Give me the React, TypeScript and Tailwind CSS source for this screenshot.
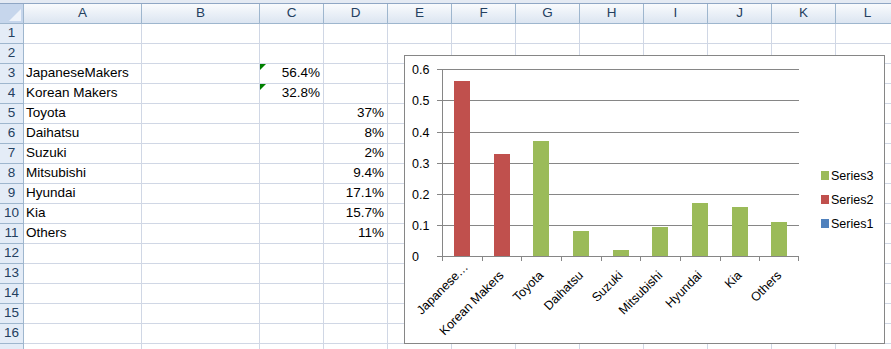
import React from 'react';

const colWidths = [
  'w-[118px]', 'w-[118px]', 'w-[64px]', 'w-[64px]', 'w-[64px]', 'w-[64px]',
  'w-[64px]', 'w-[64px]', 'w-[64px]', 'w-[64px]', 'w-[64px]', 'w-[64px]',
];
const colNames = ['A', 'B', 'C', 'D', 'E', 'F', 'G', 'H', 'I', 'J', 'K', 'L'];

interface Row {
  a?: string;
  c?: string;
  d?: string;
  flag?: boolean;
}

const rows: Row[] = [
  {},
  {},
  { a: 'JapaneseMakers', c: '56.4%', flag: true },
  { a: 'Korean Makers', c: '32.8%', flag: true },
  { a: 'Toyota', d: '37%' },
  { a: 'Daihatsu', d: '8%' },
  { a: 'Suzuki', d: '2%' },
  { a: 'Mitsubishi', d: '9.4%' },
  { a: 'Hyundai', d: '17.1%' },
  { a: 'Kia', d: '15.7%' },
  { a: 'Others', d: '11%' },
  {},
  {},
  {},
  {},
  {},
  {},
];

const RED = '#C0504D';
const GREEN = '#9BBB59';
const BLUE = '#4F81BD';

const bars = [
  { name: 'Japanese…', v: 0.564, color: RED },
  { name: 'Korean Makers', v: 0.328, color: RED },
  { name: 'Toyota', v: 0.37, color: GREEN },
  { name: 'Daihatsu', v: 0.08, color: GREEN },
  { name: 'Suzuki', v: 0.02, color: GREEN },
  { name: 'Mitsubishi', v: 0.094, color: GREEN },
  { name: 'Hyundai', v: 0.171, color: GREEN },
  { name: 'Kia', v: 0.157, color: GREEN },
  { name: 'Others', v: 0.11, color: GREEN },
];

function Chart() {
  const x0 = 37;
  const x1 = 394;
  const y0 = 200;
  const scale = 311.1;
  const step = (x1 - x0) / bars.length;
  const yOf = (v: number) => y0 - v * scale;
  const font = '"Liberation Sans", Arial, sans-serif';

  return (
    <div className="absolute left-[404px] top-[55px] w-[481px] h-[289px] border border-[#868686] bg-white">
      <svg width={479} height={287} className="block">
        {[0.1, 0.2, 0.3, 0.4, 0.5, 0.6].map((v) => (
          <line
            key={v}
            x1={x0 - 5}
            x2={x1}
            y1={Math.round(yOf(v)) + 0.5}
            y2={Math.round(yOf(v)) + 0.5}
            stroke="#868686"
          />
        ))}
        {[0, 0.1, 0.2, 0.3, 0.4, 0.5, 0.6].map((v) => (
          <text
            key={v}
            x={7}
            y={Math.round(yOf(v)) + 5}
            fontSize={12.5}
            fontFamily={font}
            fill="#000"
          >
            {v === 0 ? '0' : v.toFixed(1)}
          </text>
        ))}
        {bars.map((b, i) => {
          const cx = x0 + step * (i + 0.5);
          const top = Math.round(yOf(b.v));
          return (
            <rect
              key={b.name}
              x={Math.round(cx - 8)}
              y={top}
              width={16}
              height={y0 - top}
              fill={b.color}
            />
          );
        })}
        <line x1={x0 + 0.5} x2={x0 + 0.5} y1={Math.round(yOf(0.6))} y2={y0 + 1} stroke="#868686" />
        <line x1={x0 - 5} x2={x1} y1={y0 + 0.5} y2={y0 + 0.5} stroke="#868686" />
        {bars.map((_, i) => (
          <line
            key={i}
            x1={Math.round(x0 + step * i) + 0.5}
            x2={Math.round(x0 + step * i) + 0.5}
            y1={y0}
            y2={y0 + 5}
            stroke="#868686"
          />
        ))}
        <line x1={x1 - 0.5} x2={x1 - 0.5} y1={y0} y2={y0 + 5} stroke="#868686" />
        {bars.map((b, i) => {
          const cx = x0 + step * (i + 0.5);
          const ax = i === 0 ? cx + 7 : cx + 3;
          const ay = i === 0 ? 212 : 220;
          return (
            <text
              key={b.name}
              transform={`translate(${ax} ${ay}) rotate(-45)`}
              textAnchor="end"
              fontSize={12.5}
              fontFamily={font}
              fill="#000"
            >
              {b.name}
            </text>
          );
        })}
        {[
          { n: 'Series3', c: GREEN, y: 115 },
          { n: 'Series2', c: RED, y: 139 },
          { n: 'Series1', c: BLUE, y: 163 },
        ].map((s) => (
          <g key={s.n}>
            <rect x={416} y={s.y} width={8} height={9} fill={s.c} />
            <text x={426} y={s.y + 9} fontSize={12.5} fontFamily={font} fill="#000">
              {s.n}
            </text>
          </g>
        ))}
      </svg>
    </div>
  );
}

export default function App() {
  return (
    <div className="relative w-[891px] h-[349px] overflow-hidden bg-white font-['Liberation_Sans',Arial,sans-serif] text-[13.5px] text-black">
      <div className="h-[3px] bg-[#e4eaf3]" />
      <div className="flex h-[21px] border-t border-[#8fa6c4]">
        <div className="relative w-[24px] shrink-0 border-r border-b border-[#9eb6ce] bg-[#c6d6ec]">
          <svg className="absolute right-[2px] bottom-[2px]" width={12} height={12}>
            <polygon points="12,0 12,12 0,12" fill="#eef3fa" />
          </svg>
        </div>
        {colNames.map((n, i) => (
          <div
            key={n}
            className={`${colWidths[i]} shrink-0 flex items-center justify-center border-r border-b border-[#9eb6ce] bg-gradient-to-b from-[#f9fbfd] to-[#dce5f1] text-[#24405f]`}
          >
            {n}
          </div>
        ))}
      </div>
      {rows.map((r, ri) => (
        <div key={ri} className="flex h-[20px]">
          <div className="w-[24px] shrink-0 flex items-center justify-center border-r border-b border-[#9eb6ce] bg-[#e4ecf7] text-[#24405f]">
            {ri < 16 ? ri + 1 : ''}
          </div>
          {colNames.map((n, ci) => {
            let content: string | undefined;
            let right = false;
            if (n === 'A') content = r.a;
            if (n === 'C') {
              content = r.c;
              right = true;
            }
            if (n === 'D') {
              content = r.d;
              right = true;
            }
            return (
              <div
                key={n}
                className={`${colWidths[ci]} relative shrink-0 flex items-center whitespace-nowrap border-r border-b border-[#d0d7e5] ${
                  right ? 'justify-end pr-[3px]' : 'pl-[2px]'
                }`}
              >
                {n === 'C' && r.flag && (
                  <div className="absolute left-0 top-0 w-0 h-0 border-t-[6px] border-r-[6px] border-t-[#008000] border-r-transparent" />
                )}
                {content}
              </div>
            );
          })}
        </div>
      ))}
      <Chart />
    </div>
  );
}
